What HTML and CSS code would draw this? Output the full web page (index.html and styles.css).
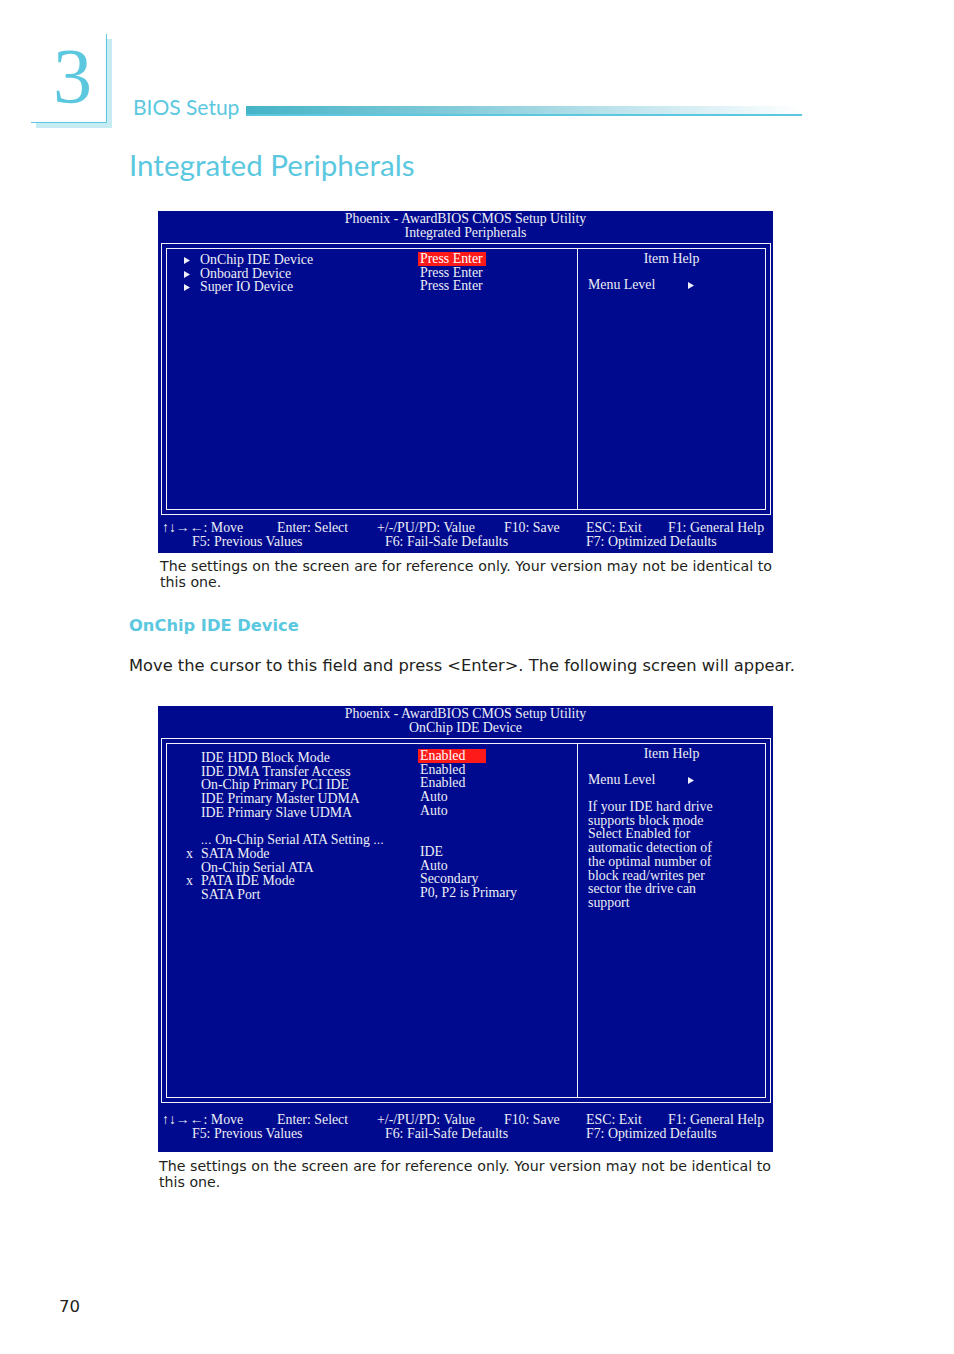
FILE: index.html
```html
<!DOCTYPE html>
<html>
<head>
<meta charset="utf-8">
<title>Integrated Peripherals</title>
<link rel="stylesheet" href="styles.css">
</head>
<body>
<div class="page">
  <header class="chapter">
    <div class="chapter-box"><span class="chapter-num">3</span></div>
    <div class="chapter-title">
      <span class="chapter-name">BIOS Setup</span>
      <span class="chapter-bar"></span>
    </div>
  </header>
  <h1 class="section-title">Integrated Peripherals</h1>

  <div class="bios bios-a">
    <div class="bios-head">
      <div>Phoenix - AwardBIOS CMOS Setup Utility</div>
      <div>Integrated Peripherals</div>
    </div>
    <div class="frame-outer">
      <div class="frame-inner">
        <div class="col-main">
          <div class="labels">
            <div class="row"><span class="mark"><svg class="tri" viewBox="0 0 6 7" width="6" height="7"><polygon points="0,0 6,3.5 0,7"/></svg></span>OnChip IDE Device</div>
            <div class="row"><span class="mark"><svg class="tri" viewBox="0 0 6 7" width="6" height="7"><polygon points="0,0 6,3.5 0,7"/></svg></span>Onboard Device</div>
            <div class="row"><span class="mark"><svg class="tri" viewBox="0 0 6 7" width="6" height="7"><polygon points="0,0 6,3.5 0,7"/></svg></span>Super IO Device</div>
          </div>
          <div class="values">
            <div class="row val hl">Press Enter</div>
            <div class="row val">Press Enter</div>
            <div class="row val">Press Enter</div>
          </div>
        </div>
        <div class="col-help">
          <div class="help-title">Item Help</div>
          <div class="menu-level"><span class="ml-text">Menu Level</span><svg class="tri" viewBox="0 0 6 7" width="6" height="7"><polygon points="0,0 6,3.5 0,7"/></svg></div>
        </div>
      </div>
    </div>
    <div class="bios-foot">
      <div class="foot-row r1">
        <span class="c1">&#8593;&#8595;&#8594;&#8592;: Move</span><span class="c2">Enter: Select</span><span class="c3">+/-/PU/PD: Value</span><span class="c4">F10: Save</span><span class="c5">ESC: Exit</span><span>F1: General Help</span>
      </div>
      <div class="foot-row r2">
        <span class="d1">F5: Previous Values</span><span class="d2">F6: Fail-Safe Defaults</span><span>F7: Optimized Defaults</span>
      </div>
    </div>
  </div>
  <p class="caption cap-a">The settings on the screen are for reference only. Your version may not be identical to this one.</p>

  <h2 class="sub-title">OnChip IDE Device</h2>
  <p class="body-text">Move the cursor to this field and press &lt;Enter&gt;. The following screen will appear.</p>

  <div class="bios bios-b">
    <div class="bios-head">
      <div>Phoenix - AwardBIOS CMOS Setup Utility</div>
      <div>OnChip IDE Device</div>
    </div>
    <div class="frame-outer">
      <div class="frame-inner">
        <div class="col-main">
          <div class="labels">
            <div class="row"><span class="mark"></span>IDE HDD Block Mode</div>
            <div class="row"><span class="mark"></span>IDE DMA Transfer Access</div>
            <div class="row"><span class="mark"></span>On-Chip Primary PCI IDE</div>
            <div class="row"><span class="mark"></span>IDE Primary Master UDMA</div>
            <div class="row"><span class="mark"></span>IDE Primary Slave UDMA</div>
            <div class="row"><span class="mark"></span>&nbsp;</div>
            <div class="row"><span class="mark"></span><span class="dots">...</span> On-Chip Serial ATA Setting <span class="dots">...</span></div>
            <div class="row"><span class="mark">x</span>SATA Mode</div>
            <div class="row"><span class="mark"></span>On-Chip Serial ATA</div>
            <div class="row"><span class="mark">x</span>PATA IDE Mode</div>
            <div class="row"><span class="mark"></span>SATA Port</div>
          </div>
          <div class="values">
            <div class="row val hl">Enabled</div>
            <div class="row val">Enabled</div>
            <div class="row val">Enabled</div>
            <div class="row val">Auto</div>
            <div class="row val">Auto</div>
            <div class="row val">&nbsp;</div>
            <div class="row val">&nbsp;</div>
            <div class="row val">IDE</div>
            <div class="row val">Auto</div>
            <div class="row val">Secondary</div>
            <div class="row val">P0, P2 is Primary</div>
          </div>
        </div>
        <div class="col-help">
          <div class="help-title">Item Help</div>
          <div class="menu-level"><span class="ml-text">Menu Level</span><svg class="tri" viewBox="0 0 6 7" width="6" height="7"><polygon points="0,0 6,3.5 0,7"/></svg></div>
          <div class="help-text">If your IDE hard drive<br>supports block mode<br>Select Enabled for<br>automatic detection of<br>the optimal number of<br>block read/writes per<br>sector the drive can<br>support</div>
        </div>
      </div>
    </div>
    <div class="bios-foot">
      <div class="foot-row r1">
        <span class="c1">&#8593;&#8595;&#8594;&#8592;: Move</span><span class="c2">Enter: Select</span><span class="c3">+/-/PU/PD: Value</span><span class="c4">F10: Save</span><span class="c5">ESC: Exit</span><span>F1: General Help</span>
      </div>
      <div class="foot-row r2">
        <span class="d1">F5: Previous Values</span><span class="d2">F6: Fail-Safe Defaults</span><span>F7: Optimized Defaults</span>
      </div>
    </div>
  </div>
  <p class="caption cap-b">The settings on the screen are for reference only. Your version may not be identical to this one.</p>

  <div class="page-num">70</div>
</div>
</body>
</html>
```

FILE: styles.css
```css
html, body {
  margin: 0;
  padding: 0;
  background: #ffffff;
}

.page {
  width: 954px;
  height: 1354px;
  position: relative;
  overflow: hidden;
  font-family: "DejaVu Sans", Verdana, sans-serif;
  color: #231f20;
}

/* ---------- chapter header ---------- */
.chapter {
  display: flex;
  align-items: flex-start;
  padding-top: 34px;
  padding-left: 31px;
}

.chapter-box {
  box-sizing: content-box;
  width: 53px;
  height: 88px;
  padding-left: 22px;
  background: #ffffff;
  border-right: 1px solid #5bc8df;
  border-bottom: 1px solid #5bc8df;
  box-shadow: 5px 5px 0 #c6ebf3;
}

.chapter-num {
  display: block;
  font-family: "Liberation Serif", "Times New Roman", serif;
  font-size: 78px;
  line-height: 1;
  margin-top: 3px;
  color: #5bc8df;
}

.chapter-title {
  display: flex;
  align-items: flex-end;
  margin-top: 61px;
  margin-left: 26px;
}

.chapter-name {
  font-family: Lato, "Open Sans", sans-serif;
  font-size: 21px;
  line-height: 24px;
  color: #5bc8df;
  white-space: nowrap;
}

.chapter-bar {
  display: block;
  width: 556px;
  height: 8px;
  margin-left: 7px;
  margin-bottom: 3px;
  background: linear-gradient(to right, #45b4c7 0%, #7fc9d8 35%, #c4e6ee 70%, #ffffff 100%);
  border-bottom: 2px solid #5bc8df;
}

.section-title {
  margin: 24px 0 0 129px;
  font-family: Lato, "Open Sans", sans-serif;
  font-weight: 400;
  font-size: 29.6px;
  line-height: 36px;
  color: #5bc8df;
}

/* ---------- BIOS screens ---------- */
.bios {
  margin-left: 158px;
  width: 615px;
  background: #000a8e;
  color: #eeeef6;
  font-family: "Liberation Serif", "Times New Roman", serif;
  font-size: 13.85px;
  line-height: 14px;
}

.bios-a { margin-top: 28px; }
.bios-b { margin-top: 30px; }

.bios-head {
  text-align: center;
  padding-top: 1px;
}

.frame-outer {
  margin: 3px 2px 0 3px;
  border: 1px solid #f2f2f8;
  padding: 4px;
}

.frame-inner {
  border: 1px solid #f2f2f8;
  display: flex;
}

.bios-a .frame-inner { height: 260px; }
.bios-b .frame-inner { height: 353px; }

.col-main {
  width: 410px;
  border-right: 1px solid #f2f2f8;
  display: flex;
}

.labels {
  width: 251px;
}

.row {
  line-height: 13.7px;
  height: 13.7px;
  white-space: nowrap;
}

.bios-a .labels { padding-top: 4px; }
.bios-a .values { padding-top: 3px; }
.bios-b .labels { padding-top: 7px; }
.bios-b .values { padding-top: 5px; }

.mark {
  display: inline-block;
  width: 33px;
  padding-left: 17px;
  box-sizing: border-box;
}

.bios-b .mark {
  width: 34px;
  padding-left: 19px;
}

.tri {
  fill: #eeeef6;
  vertical-align: 0;
}

.val {
  padding-left: 2px;
}

.hl {
  width: 66px;
  background: #ff1a1a;
  color: #ffffff;
}

.dots {
  letter-spacing: 0.6px;
  font-size: 12px;
}

.col-help {
  flex: 1;
  padding: 3px 0 0 10px;
}

.help-title {
  text-align: center;
  padding-right: 10px;
}

.menu-level {
  margin-top: 12px;
  display: flex;
  align-items: center;
}

.ml-text {
  display: inline-block;
  width: 100px;
}

.help-text {
  margin-top: 13px;
  line-height: 13.7px;
}

.bios-a .bios-foot { margin-top: 6px; padding-bottom: 4px; }
.bios-b .bios-foot { margin-top: 10px; padding-bottom: 11px; }

.foot-row {
  display: flex;
  white-space: nowrap;
}

.foot-row span { display: inline-block; }

.r1 { padding-left: 4px; }
.r1 .c1 { width: 115px; }
.r1 .c2 { width: 100px; }
.r1 .c3 { width: 127px; }
.r1 .c4 { width: 82px; }
.r1 .c5 { width: 82px; }

.r2 { padding-left: 34px; }
.r2 .d1 { width: 193px; }
.r2 .d2 { width: 201px; }

/* ---------- text ---------- */
.caption {
  width: 612px;
  margin: 5px 0 0 160px;
  font-size: 14.2px;
  line-height: 16px;
  text-align: justify;
  color: #231f20;
}

.cap-b {
  margin-top: 6px;
  margin-left: 159px;
}

.sub-title {
  margin: 26px 0 0 129px;
  font-size: 16.3px;
  font-weight: 700;
  line-height: 20px;
  color: #5bc8df;
}

.body-text {
  margin: 20px 0 0 129px;
  font-size: 16.3px;
  line-height: 20px;
  white-space: nowrap;
  color: #231f20;
}

.page-num {
  margin: 107px 0 0 59px;
  font-size: 16.5px;
  line-height: 20px;
  color: #231f20;
}
```
